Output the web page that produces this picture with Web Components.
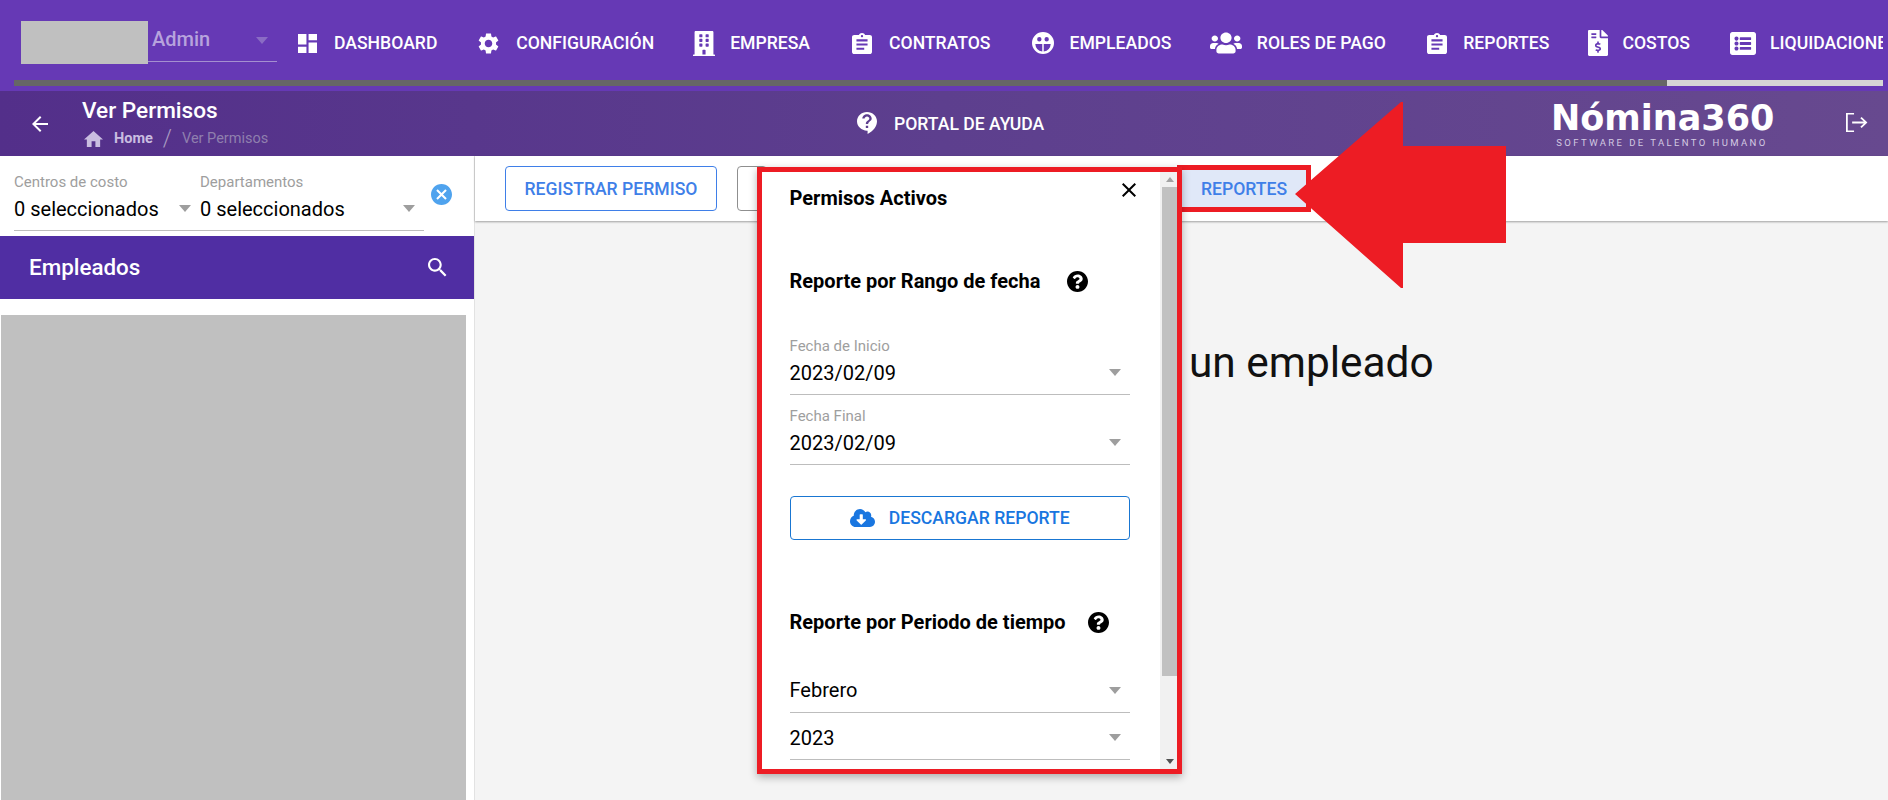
<!DOCTYPE html>
<html lang="es">
<head>
<meta charset="utf-8">
<title>Ver Permisos</title>
<style>
  html, body { margin: 0; height: 100%; overflow: hidden; }
  body { font-family: Roboto, "Liberation Sans", sans-serif; background: #f4f4f4; }
</style>
</head>
<body>
<app-shell></app-shell>
<script>
const ICONS = {
  dashboard: ['3 3 18 18', 'M3 13h8V3H3v10zm0 8h8v-6H3v6zm10 0h8V11h-8v10zm0-18v6h8V3h-8z'],
  settings: ['2 2 20 20', 'M19.14 12.94c.04-.3.06-.61.06-.94 0-.32-.02-.64-.07-.94l2.03-1.58c.18-.14.23-.41.12-.61l-1.92-3.32c-.12-.22-.37-.29-.59-.22l-2.39.96c-.5-.38-1.03-.7-1.62-.94l-.36-2.54c-.04-.24-.24-.41-.48-.41h-3.84c-.24 0-.43.17-.47.41l-.36 2.54c-.59.24-1.13.57-1.62.94l-2.39-.96c-.22-.08-.47 0-.59.22L2.74 8.87c-.12.21-.08.47.12.61l2.03 1.58c-.05.3-.09.63-.09.94s.02.64.07.94l-2.03 1.58c-.18.14-.23.41-.12.61l1.92 3.32c.12.22.37.29.59.22l2.39-.96c.5.38 1.03.7 1.62.94l.36 2.54c.05.24.24.41.48.41h3.84c.24 0 .44-.17.47-.41l.36-2.54c.59-.24 1.13-.56 1.62-.94l2.39.96c.22.08.47 0 .59-.22l1.92-3.32c.12-.22.07-.47-.12-.61l-2.01-1.58zM12 15.6c-1.98 0-3.6-1.62-3.6-3.6s1.62-3.6 3.6-3.6 3.6 1.62 3.6 3.6-1.62 3.6-3.6 3.6z'],
  building: ['0 0 448 512', 'M436 480h-20V24c0-13.255-10.745-24-24-24H56C42.745 0 32 10.745 32 24v456H12c-6.627 0-12 5.373-12 12v20h448v-20c0-6.627-5.373-12-12-12zM128 76c0-6.627 5.373-12 12-12h40c6.627 0 12 5.373 12 12v40c0 6.627-5.373 12-12 12h-40c-6.627 0-12-5.373-12-12V76zm0 96c0-6.627 5.373-12 12-12h40c6.627 0 12 5.373 12 12v40c0 6.627-5.373 12-12 12h-40c-6.627 0-12-5.373-12-12v-40zm52 148h-40c-6.627 0-12-5.373-12-12v-40c0-6.627 5.373-12 12-12h40c6.627 0 12 5.373 12 12v40c0 6.627-5.373 12-12 12zm76 160h-64v-84c0-6.627 5.373-12 12-12h40c6.627 0 12 5.373 12 12v84zm64-172c0 6.627-5.373 12-12 12h-40c-6.627 0-12-5.373-12-12v-40c0-6.627 5.373-12 12-12h40c6.627 0 12 5.373 12 12v40zm0-96c0 6.627-5.373 12-12 12h-40c-6.627 0-12-5.373-12-12v-40c0-6.627 5.373-12 12-12h40c6.627 0 12 5.373 12 12v40zm0-96c0 6.627-5.373 12-12 12h-40c-6.627 0-12-5.373-12-12V76c0-6.627 5.373-12 12-12h40c6.627 0 12 5.373 12 12v40z'],
  assignment: ['3 1 18 20', 'M19 3h-4.18C14.4 1.84 13.3 1 12 1c-1.3 0-2.4.84-2.82 2H5c-1.1 0-2 .9-2 2v14c0 1.1.9 2 2 2h14c1.1 0 2-.9 2-2V5c0-1.1-.9-2-2-2zm-7 0c.55 0 1 .45 1 1s-.45 1-1 1-1-.45-1-1 .45-1 1-1zm2 14H7v-2h7v2zm3-4H7v-2h10v2zm0-4H7V7h10v2z'],
  face: ['0 0 24 24', 'M12 0a12 12 0 1 0 0 24 12 12 0 0 0 0-24zM8 5.5a2.4 2.4 0 1 1 0 4.8 2.4 2.4 0 0 1 0-4.8zm8 0a2.4 2.4 0 1 1 0 4.8 2.4 2.4 0 0 1 0-4.8zM11.2 21.2A9 9 0 0 1 3.6 13h7.6zm1.6 0V13h7.6a9 9 0 0 1-7.6 8.2z'],
  users: ['0 0 640 512', 'M96 224c35.3 0 64-28.7 64-64s-28.7-64-64-64-64 28.7-64 64 28.7 64 64 64zm448 0c35.3 0 64-28.7 64-64s-28.7-64-64-64-64 28.7-64 64 28.7 64 64 64zm32 32h-64c-17.6 0-33.5 7.1-45.1 18.6 40.3 22.1 68.9 62 75.1 109.4h66c17.7 0 32-14.3 32-32v-32c0-35.3-28.7-64-64-64zm-256 0c61.9 0 112-50.1 112-112S381.9 32 320 32 208 82.1 208 144s50.1 112 112 112zm76.8 32h-8.3c-20.8 10-43.9 16-68.5 16s-47.6-6-68.5-16h-8.3C179.6 288 128 339.6 128 403.2V432c0 26.5 21.5 48 48 48h288c26.5 0 48-21.5 48-48v-28.8c0-63.6-51.6-115.2-115.2-115.2zm-223.7-13.4C161.5 263.1 145.6 256 128 256H64c-35.3 0-64 28.7-64 64v32c0 17.7 14.3 32 32 32h65.9c6.3-47.4 34.9-87.3 75.2-109.4z'],
  invoice: ['0 0 384 512', 'M377 105L279.1 7c-4.5-4.5-10.6-7-17-7H256v128h128v-6.1c0-6.3-2.5-12.4-7-16.9zm-153 31V0H24C10.7 0 0 10.7 0 24v464c0 13.3 10.7 24 24 24h336c13.3 0 24-10.7 24-24V160H248c-13.2 0-24-10.8-24-24zM64 72c0-4.42 3.58-8 8-8h80c4.42 0 8 3.58 8 8v16c0 4.42-3.58 8-8 8H72c-4.42 0-8-3.58-8-8V72zm0 80v-16c0-4.42 3.58-8 8-8h80c4.42 0 8 3.58 8 8v16c0 4.42-3.58 8-8 8H72c-4.42 0-8-3.58-8-8zm144 263.88V440c0 4.42-3.58 8-8 8h-16c-4.42 0-8-3.58-8-8v-24.29c-11.29-.58-22.27-4.52-31.37-11.35-3.9-2.93-4.1-8.77-.57-12.14l11.75-11.21c2.77-2.64 6.89-2.76 10.13-.73 3.87 2.42 8.26 3.72 12.82 3.72h28.11c6.5 0 11.8-5.92 11.8-13.19 0-5.95-3.61-11.19-8.77-12.73l-45-13.5c-18.59-5.58-31.58-23.42-31.58-43.39 0-24.52 19.05-44.44 42.67-45.07V232c0-4.42 3.58-8 8-8h16c4.42 0 8 3.58 8 8v24.29c11.29.58 22.27 4.51 31.37 11.35 3.9 2.93 4.1 8.77.57 12.14l-11.75 11.21c-2.77 2.64-6.89 2.76-10.13.73-3.87-2.43-8.26-3.72-12.82-3.72h-28.11c-6.5 0-11.8 5.92-11.8 13.19 0 5.95 3.61 11.19 8.77 12.73l45 13.5c18.59 5.58 31.58 23.42 31.58 43.39 0 24.53-19.05 44.44-42.67 45.07z'],
  listalt: ['0 32 512 448', 'M464 480H48c-26.51 0-48-21.49-48-48V80c0-26.51 21.49-48 48-48h416c26.51 0 48 21.49 48 48v352c0 26.51-21.49 48-48 48zM128 120c-22.091 0-40 17.909-40 40s17.909 40 40 40 40-17.909 40-40-17.909-40-40-40zm0 96c-22.091 0-40 17.909-40 40s17.909 40 40 40 40-17.909 40-40-17.909-40-40-40zm0 96c-22.091 0-40 17.909-40 40s17.909 40 40 40 40-17.909 40-40-17.909-40-40-40zm288-136v-32c0-6.627-5.373-12-12-12H204c-6.627 0-12 5.373-12 12v32c0 6.627 5.373 12 12 12h200c6.627 0 12-5.373 12-12zm0 96v-32c0-6.627-5.373-12-12-12H204c-6.627 0-12 5.373-12 12v32c0 6.627 5.373 12 12 12h200c6.627 0 12-5.373 12-12zm0 96v-32c0-6.627-5.373-12-12-12H204c-6.627 0-12 5.373-12 12v32c0 6.627 5.373 12 12 12h200c6.627 0 12-5.373 12-12z'],
  support: ['3 2 17 20', 'M11.5 2C6.81 2 3 5.81 3 10.5S6.81 19 11.5 19h.5v3c4.86-2.34 8-7 8-11.5C20 5.81 16.19 2 11.5 2zm1 14.5h-2v-2h2v2zm0-3.5h-2c0-3.25 3-3 3-5 0-1.1-.9-2-2-2s-2 .9-2 2h-2c0-2.21 1.79-4 4-4s4 1.79 4 4c0 2.5-3 2.75-3 5z'],
  back: ['4 4 16 16', 'M20 11H7.83l5.59-5.59L12 4l-8 8 8 8 1.41-1.41L7.83 13H20v-2z'],
  home: ['2 3 20 17', 'M10 20v-6h4v6h5v-8h3L12 3 2 12h3v8z'],
  search: ['3 3 18 18', 'M15.5 14h-.79l-.28-.27C15.41 12.59 16 11.11 16 9.5 16 5.91 13.09 3 9.5 3S3 5.91 3 9.5 5.91 16 9.5 16c1.61 0 3.09-.59 4.23-1.57l.27.28v.79l5 4.99L20.49 19l-4.99-5zm-6 0C7.01 14 5 11.99 5 9.5S7.01 5 9.5 5 14 7.01 14 9.5 11.99 14 9.5 14z'],
  close: ['5 5 14 14', 'M19 6.41L17.59 5 12 10.59 6.41 5 5 6.41 10.59 12 5 17.59 6.41 19 12 13.41 17.59 19 19 17.59 13.41 12z'],
  cancel: ['2 2 20 20', 'M12 2C6.47 2 2 6.47 2 12s4.47 10 10 10 10-4.47 10-10S17.53 2 12 2zm5 13.59L15.59 17 12 13.41 8.41 17 7 15.59 10.59 12 7 8.41 8.41 7 12 10.59 15.59 7 17 8.41 13.41 12 17 15.59z'],
  help: ['8 8 496 496', 'M504 256c0 136.997-111.043 248-248 248S8 392.997 8 256C8 119.083 119.043 8 256 8s248 111.083 248 248zM262.655 90c-54.497 0-89.255 22.957-116.549 63.758-3.536 5.286-2.353 12.415 2.715 16.258l34.699 26.31c5.205 3.947 12.621 3.008 16.665-2.122 17.864-22.658 30.113-35.797 57.303-35.797 20.429 0 45.698 13.148 45.698 32.958 0 14.976-12.363 22.667-32.534 33.976C247.128 238.528 216 254.941 216 296v4c0 6.627 5.373 12 12 12h56c6.627 0 12-5.373 12-12v-1.333c0-28.462 83.186-29.647 83.186-106.667 0-58.002-60.165-102-116.531-102zM256 338c-25.365 0-46 20.635-46 46 0 25.364 20.635 46 46 46s46-20.636 46-46c0-25.365-20.635-46-46-46z'],
  cloud: ['0 32 640 448', 'M537.6 226.6c4.1-10.7 6.4-22.4 6.4-34.6 0-53-43-96-96-96-19.7 0-38.1 6-53.3 16.2C367 64.2 315.3 32 256 32c-88.4 0-160 71.6-160 160 0 2.7.1 5.4.2 8.1C40.2 219.8 0 273.2 0 336c0 79.5 64.5 144 144 144h368c70.7 0 128-57.3 128-128 0-61.9-44-113.6-102.4-125.4zm-132.9 88.7L299.3 420.7c-6.2 6.2-16.4 6.2-22.6 0L171.3 315.3c-10.1-10.1-2.9-27.3 11.3-27.3H248V176c0-8.8 7.2-16 16-16h48c8.8 0 16 7.2 16 16v112h65.4c14.2 0 21.4 17.2 11.3 27.3z'],
  logout: ['1.2 1 18.6 17', 'M8 1H1.2v17H8v-1.4H2.7V2.4H8zM14.4 4.6l-1.1 1.1 3 3H6.4v1.6h9.9l-3 3 1.1 1.1 4.9-4.9z']
};

class AppIcon extends HTMLElement {
  connectedCallback() {
    if (this.shadowRoot) return;
    this.attachShadow({mode: 'open'});
    const [box, d] = ICONS[this.getAttribute('name')];
    const w = this.getAttribute('w');
    const h = this.getAttribute('h');
    this.shadowRoot.innerHTML = `
      <style>
        :host { display: inline-flex; flex: none; }
        svg { display: block; fill: currentColor; }
      </style>
      <svg width="${w}" height="${h}" viewBox="${box}" preserveAspectRatio="none"><path fill-rule="evenodd" d="${d}"/></svg>`;
  }
}
customElements.define('app-icon', AppIcon);

class NavItem extends HTMLElement {
  connectedCallback() {
    if (this.shadowRoot) return;
    this.attachShadow({mode: 'open'});
    const col = this.getAttribute('col');
    const left = this.getAttribute('left');
    this.shadowRoot.innerHTML = `
      <style>
        :host { display: flex; align-items: center; flex: none; margin-left: ${left}px; color: #fff; font-size: 17.6px; font-weight: 500; white-space: nowrap; }
        .ico { width: ${col}px; display: flex; }
      </style>
      <span class="ico"><slot name="icon"></slot></span><slot></slot>`;
  }
}
customElements.define('nav-item', NavItem);

class TopBar extends HTMLElement {
  constructor() {
    super();
    this.attachShadow({mode: 'open'});
    this.shadowRoot.innerHTML = `
      <style>
        :host { display: block; height: 91px; background: #6639b5; }
        .row { display: flex; height: 74px; padding-top: 6px; margin-right: 5px; overflow: hidden; align-items: center; }
        .brand { display: flex; flex: none; align-self: flex-start; margin: 15px 0 0 21px; }
        .blank { width: 127px; height: 43px; background: #c0c0c0; }
        .role { width: 129px; height: 41px; box-sizing: border-box; border-bottom: 1px solid #a48fd0; position: relative; color: #b7a3dd; font-size: 20px; font-weight: 500; padding: 6px 0 0 4px; }
        .role::after { content: ""; position: absolute; right: 9px; top: 16px; border: 6.5px solid transparent; border-top: 7px solid #8a6cc4; border-bottom: 0; }
        nav { display: flex; align-items: center; margin-left: 21px; }
        .bar { margin: 0 5px 5px 14px; height: 6px; background: #666; display: flex; justify-content: flex-end; }
        .thumb { width: 216px; background: #d6d6d6; }
      </style>
      <div class="row">
        <div class="brand"><div class="blank"></div><div class="role">Admin</div></div>
        <nav>
          <nav-item col="36" left="0"><app-icon slot="icon" name="dashboard" w="19" h="19"></app-icon>DASHBOARD</nav-item>
          <nav-item col="38" left="40.8"><app-icon slot="icon" name="settings" w="21" h="21"></app-icon>CONFIGURACIÓN</nav-item>
          <nav-item col="37" left="39"><app-icon slot="icon" name="building" w="22" h="25"></app-icon>EMPRESA</nav-item>
          <nav-item col="37" left="42"><app-icon slot="icon" name="assignment" w="20" h="21"></app-icon>CONTRATOS</nav-item>
          <nav-item col="38" left="41"><app-icon slot="icon" name="face" w="22" h="22"></app-icon>EMPLEADOS</nav-item>
          <nav-item col="47" left="38.4"><app-icon slot="icon" name="users" w="32" h="24"></app-icon>ROLES DE PAGO</nav-item>
          <nav-item col="36.4" left="41"><app-icon slot="icon" name="assignment" w="20" h="21"></app-icon>REPORTES</nav-item>
          <nav-item col="34" left="39"><app-icon slot="icon" name="invoice" w="20" h="26"></app-icon>COSTOS</nav-item>
          <nav-item col="40" left="40.2"><app-icon slot="icon" name="listalt" w="26" h="23"></app-icon>LIQUIDACIONES</nav-item>
        </nav>
      </div>
      <div class="bar"><div class="thumb"></div></div>`;
  }
}
customElements.define('top-bar', TopBar);

class SubHeader extends HTMLElement {
  constructor() {
    super();
    this.attachShadow({mode: 'open'});
    this.shadowRoot.innerHTML = `
      <style>
        :host { display: flex; align-items: center; height: 65px; background: linear-gradient(90deg, #532f8a, #5d3f8e 50%, #67498f); color: #fff; }
        .back { margin-left: 32px; width: 50px; }
        .titles { width: 775px; flex: none; margin-top: -2px; }
        h1 { margin: 0; font-size: 22.6px; line-height: 26px; font-weight: 500; }
        .crumbs { display: flex; align-items: center; margin-top: 6px; height: 18px; font-size: 14.5px; color: #8f7fae; }
        .crumbs app-icon { color: #c9bde0; margin: 0 11px 0 2px; }
        .crumbs b { color: #c9bde0; font-weight: 700; }
        .crumbs i { font-style: normal; font-size: 23px; font-weight: 300; margin: 0 10px; color: #a99bc2; }
        .portal { display: flex; align-items: center; font-size: 17.6px; font-weight: 500; margin-top: 1px; }
        .portal app-icon { margin: -2px 17px 0 0; }
        .logo { margin-left: auto; width: 222px; text-align: center; margin-top: 2px; }
        .logo strong { display: block; font-family: "DejaVu Sans", Inter, sans-serif; font-size: 35px; line-height: 35px; font-weight: 700; white-space: nowrap; }
        .logo small { display: block; font-size: 9.5px; line-height: 11px; letter-spacing: 2.4px; color: #d3cae2; white-space: nowrap; margin-top: 1px; }
        .out { margin: -2px 20px 0 73px; }
      </style>
      <app-icon class="back" name="back" w="16" h="16"></app-icon>
      <div class="titles">
        <h1>Ver Permisos</h1>
        <div class="crumbs"><app-icon name="home" w="19" h="16"></app-icon><b>Home</b><i>/</i>Ver Permisos</div>
      </div>
      <div class="portal"><app-icon name="support" w="20" h="22"></app-icon>PORTAL DE AYUDA</div>
      <div class="logo"><strong>Nómina360</strong><small>SOFTWARE DE TALENTO HUMANO</small></div>
      <app-icon class="out" name="logout" w="22" h="19"></app-icon>`;
  }
}
customElements.define('sub-header', SubHeader);

class SelectField extends HTMLElement {
  connectedCallback() {
    if (this.shadowRoot) return;
    this.attachShadow({mode: 'open'});
    const label = this.getAttribute('label');
    this.shadowRoot.innerHTML = `
      <style>
        :host { display: block; box-sizing: border-box; position: relative; border-bottom: 1px solid #bdbdbd; padding-bottom: 9px; }
        .label { height: 18px; line-height: 18px; margin: 0 0 6px; font-size: 15px; color: #9e9e9e; white-space: nowrap; }
        .value { height: 24px; line-height: 24px; font-size: 20px; color: #000; white-space: nowrap; }
        .arrow { position: absolute; right: 9px; bottom: 18px; border: 6.5px solid transparent; border-top: 7px solid #9e9e9e; border-bottom: 0; }
      </style>
      ${label ? `<div class="label">${label}</div>` : ''}
      <div class="value"><slot></slot></div>
      <span class="arrow"></span>`;
  }
}
customElements.define('select-field', SelectField);

class SidePanel extends HTMLElement {
  constructor() {
    super();
    this.attachShadow({mode: 'open'});
    this.shadowRoot.innerHTML = `
      <style>
        :host { display: flex; flex-direction: column; flex: none; width: 474px; background: #fff; border-right: 1px solid #e2e2e2; }
        .filters { display: flex; align-items: flex-start; height: 63px; padding: 17px 0 0 14px; }
        select-field:nth-of-type(1) { width: 186px; }
        select-field:nth-of-type(2) { width: 224px; }
        .clear { color: #4fa3ee; margin: 11px 0 0 7px; }
        .head { display: flex; align-items: center; justify-content: space-between; height: 62px; padding: 0 27px 1px 29px; background: #502ea3; color: #fff; font-size: 22.4px; font-weight: 500; }
        .list { flex: 1; margin: 16px 8px 0 1px; background: #c0c0c0; }
      </style>
      <div class="filters">
        <select-field label="Centros de costo">0 seleccionados</select-field>
        <select-field label="Departamentos">0 seleccionados</select-field>
        <app-icon class="clear" name="cancel" w="21" h="21"></app-icon>
      </div>
      <div class="head">Empleados<app-icon name="search" w="19" h="19"></app-icon></div>
      <div class="list"></div>`;
  }
}
customElements.define('side-panel', SidePanel);

class OutlineButton extends HTMLElement {
  connectedCallback() {
    if (this.shadowRoot) return;
    this.attachShadow({mode: 'open'});
    this.shadowRoot.innerHTML = `
      <style>
        :host { display: flex; align-items: center; justify-content: center; box-sizing: border-box; flex: none; height: 45px; border: 1px solid #3f7fe8; border-radius: 4px; color: #3f7fe8; font-size: 17.6px; font-weight: 500; white-space: nowrap; }
      </style>
      <slot></slot>`;
  }
}
customElements.define('outline-button', OutlineButton);

class ReportPopup extends HTMLElement {
  constructor() {
    super();
    this.attachShadow({mode: 'open'});
    this.shadowRoot.innerHTML = `
      <style>
        :host { position: absolute; left: 282px; top: 11px; width: 425px; height: 607px; box-sizing: border-box; display: flex; background: #fff; border: 5px solid #ed1c24; box-shadow: 0 3px 8px rgba(0,0,0,.3); }
        .body { flex: 1; position: relative; overflow: hidden; padding: 15px 30px 0 27.5px; }
        h2 { margin: 0; font-size: 20px; line-height: 22px; font-weight: 700; color: #000; }
        h3 { display: flex; align-items: center; margin: 60px 0 0; font-size: 20px; line-height: 24px; font-weight: 700; color: #000; }
        h3 app-icon { margin-left: 27px; }
        h3.per { margin-top: 70px; }
        h3.per app-icon { margin-left: 22px; }
        .close { position: absolute; right: 24px; top: 11px; color: #000; }
        select-field { margin-top: 12px; }
        select-field.first { margin-top: 44px; }
        h3.per + select-field { margin-top: 44px; padding-bottom: 10px; }
        h3.per + select-field + select-field { margin-top: 13px; }
        outline-button { height: 44px; margin-top: 31px; color: #1976e0; border-color: #1976d2; }
        outline-button app-icon { margin-right: 14px; }
        .sb { flex: none; width: 17px; background: #f1f1f1; display: flex; flex-direction: column; align-items: flex-end; }
        .up, .down { width: 15px; height: 15px; display: flex; align-items: center; justify-content: center; }
        .up::before { content: ""; border: 4px solid transparent; border-bottom: 5px solid #a3a3a3; border-top: 0; }
        .down::before { content: ""; border: 4px solid transparent; border-top: 5px solid #505050; border-bottom: 0; }
        .thumb { width: 15px; height: 489px; background: #c1c1c1; }
        .rest { flex: 1; }
      </style>
      <div class="body">
        <h2>Permisos Activos</h2>
        <app-icon class="close" name="close" w="14" h="14"></app-icon>
        <h3>Reporte por Rango de fecha<app-icon name="help" w="21" h="21"></app-icon></h3>
        <select-field class="first" label="Fecha de Inicio">2023/02/09</select-field>
        <select-field label="Fecha Final">2023/02/09</select-field>
        <outline-button><app-icon name="cloud" w="25" h="18"></app-icon>DESCARGAR REPORTE</outline-button>
        <h3 class="per">Reporte por Periodo de tiempo<app-icon name="help" w="21" h="21"></app-icon></h3>
        <select-field>Febrero</select-field>
        <select-field>2023</select-field>
      </div>
      <div class="sb"><div class="up"></div><div class="thumb"></div><div class="rest"></div><div class="down"></div></div>`;
  }
}
customElements.define('report-popup', ReportPopup);

class MainPanel extends HTMLElement {
  constructor() {
    super();
    this.attachShadow({mode: 'open'});
    this.shadowRoot.innerHTML = `
      <style>
        :host { display: flex; flex-direction: column; flex: 1; min-width: 0; position: relative; background: #f4f4f4; }
        .tools { display: flex; align-items: center; height: 65px; flex: none; box-sizing: border-box; padding-left: 30px; background: #fff; box-shadow: 0 1px 2px rgba(0,0,0,.35); }
        .tools .reg { width: 212px; }
        .tools .blank { width: 30px; margin-left: 20px; border-color: #8f8f8f; }
        .rep { box-sizing: border-box; width: 134px; height: 47px; margin-left: 410px; border: 5px solid #ed1c24; background: #e0e8f8; color: #3f7fe8; font-size: 17.6px; font-weight: 500; display: flex; align-items: center; justify-content: center; flex: none; }
        .empty { padding: 119px 0 0 714px; font-size: 42.4px; line-height: 46px; color: #111; }
      </style>
      <div class="tools">
        <outline-button class="reg">REGISTRAR PERMISO</outline-button>
        <outline-button class="blank"></outline-button>
        <div class="rep">REPORTES</div>
      </div>
      <div class="empty">un empleado</div>
      <report-popup></report-popup>`;
  }
}
customElements.define('main-panel', MainPanel);

class PointerArrow extends HTMLElement {
  constructor() {
    super();
    this.attachShadow({mode: 'open'});
    this.shadowRoot.innerHTML = `
      <style>
        :host { position: absolute; left: 1290px; top: 96px; width: 220px; height: 196px; }
        svg { display: block; }
      </style>
      <svg width="220" height="196" viewBox="0 0 220 196"><path d="M5 98 111 6l2 0 0 44 103 0 0 97-103 0 0 45-2 0z" fill="#ed1c24"/></svg>`;
  }
}
customElements.define('pointer-arrow', PointerArrow);

class AppShell extends HTMLElement {
  constructor() {
    super();
    this.attachShadow({mode: 'open'});
    this.shadowRoot.innerHTML = `
      <style>
        :host { display: flex; flex-direction: column; height: 800px; position: relative; overflow: hidden; }
        .content { display: flex; flex: 1; min-height: 0; }
      </style>
      <top-bar></top-bar>
      <sub-header></sub-header>
      <div class="content">
        <side-panel></side-panel>
        <main-panel></main-panel>
      </div>
      <pointer-arrow></pointer-arrow>`;
  }
}
customElements.define('app-shell', AppShell);
</script>
</body>
</html>
